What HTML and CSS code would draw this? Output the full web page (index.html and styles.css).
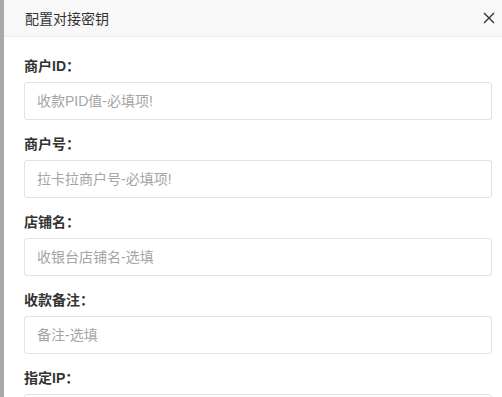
FILE: index.html
```html
<!DOCTYPE html>
<html lang="zh-CN">
<head>
    <meta charset="UTF-8">
    <meta name="viewport" content="width=device-width, initial-scale=1.0">
    <title>配置对接密钥</title>
    <link rel="stylesheet" href="styles.css">
</head>
<body>
    <div class="layer">
        <div class="layer-title">
            <span>配置对接密钥</span>
            <a class="layer-close" href="#">
                <svg width="12" height="12" viewBox="0 0 12 12">
                    <path d="M1 1L11 11M11 1L1 11" stroke="#333" stroke-width="1.4" fill="none"/>
                </svg>
            </a>
        </div>

        <form class="layer-content">
            <div class="form-item">
                <label>商户ID：</label>
                <input type="text" placeholder="收款PID值-必填项!">
            </div>
            <div class="form-item">
                <label>商户号：</label>
                <input type="text" placeholder="拉卡拉商户号-必填项!">
            </div>
            <div class="form-item">
                <label>店铺名：</label>
                <input type="text" placeholder="收银台店铺名-选填">
            </div>
            <div class="form-item">
                <label>收款备注：</label>
                <input type="text" placeholder="备注-选填">
            </div>
            <div class="form-item ip-item">
                <label>指定IP：</label>
                <input type="text">
                <span class="ip-dot"></span>
            </div>
        </form>
    </div>
</body>
</html>
```

FILE: styles.css
```css
* {
    box-sizing: border-box;
    margin: 0;
    padding: 0;
}

body {
    font-family: "Liberation Sans", "Noto Sans CJK SC", Arial, sans-serif;
    background-color: #a9a9a9;
    color: #333;
    font-size: 14px;
    overflow: hidden;
}

.layer {
    margin-left: 4px;
    min-height: 100vh;
    background-color: #fff;
}

.layer-title {
    display: flex;
    align-items: center;
    justify-content: space-between;
    height: 37px;
    padding: 0 7px 0 21px;
    background-color: #f8f8f8;
    border-bottom: 1px solid #eee;
    font-size: 14px;
    color: #333;
}

.layer-close {
    display: flex;
    width: 12px;
    height: 12px;
}

.layer-content {
    padding: 19px 10px 0 20px;
}

.form-item {
    margin-bottom: 14px;
}

.form-item label {
    display: block;
    height: 20px;
    line-height: 20px;
    margin-bottom: 6px;
    font-weight: bold;
    color: #333;
}

.form-item input {
    display: block;
    width: 100%;
    height: 38px;
    padding: 0 12px;
    border: 1px solid #e2e2e2;
    border-radius: 3px;
    font-family: inherit;
    font-size: 14px;
    color: #333;
    outline: none;
}

.form-item input::placeholder {
    color: #a5a5a5;
}

.ip-item {
    position: relative;
}

.ip-dot {
    position: absolute;
    left: 256px;
    top: 29px;
    width: 13px;
    height: 13px;
    border-radius: 50%;
    background-color: #5b9ef0;
}
```
